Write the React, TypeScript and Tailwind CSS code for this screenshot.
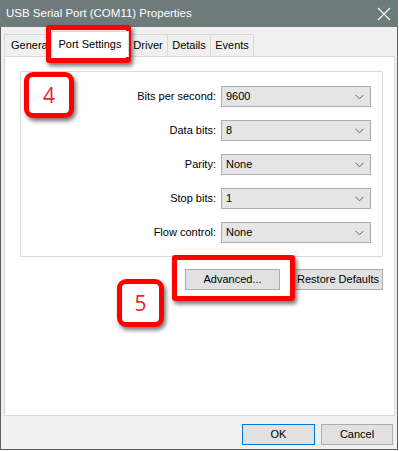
import React from "react";

const font = { fontFamily: '"Liberation Sans", Arial, sans-serif' };

function Chevron() {
  return (
    <svg width="9" height="6" viewBox="0 0 9 6" className="shrink-0">
      <path d="M0.5 0.8 L4.5 4.8 L8.5 0.8" fill="none" stroke="#606060" strokeWidth="1" />
    </svg>
  );
}

function Row({ label, value }: { label: string; value: string }) {
  return (
    <div className="flex items-center h-[21px]">
      <div className="w-[200px] text-right pr-[5px] text-[11px] text-black">{label}</div>
      <div className="w-[150px] h-[21px] border border-[#adadad] bg-[#e5e5e5] flex items-center justify-between pl-[4px] pr-[6px] text-[11px] text-black">
        <span>{value}</span>
        <Chevron />
      </div>
    </div>
  );
}

export default function App() {
  return (
    <div className="w-[399px] h-[451px] bg-white" style={font}>
      <div className="relative w-[398px] h-[450px] bg-[#f0f0f0] border-l border-r border-b border-[#5f5f5f] flex flex-col">
        {/* Title bar */}
        <div className="h-[27px] bg-[#6d7b7b] flex items-center justify-between pl-[6px] pr-[7px] -mx-px">
          <span className="text-white text-[11.5px]">USB Serial Port (COM11) Properties</span>
          <svg width="14" height="14" viewBox="0 0 14 14">
            <path d="M1 1 L13 13 M13 1 L1 13" stroke="white" strokeWidth="1.1" />
          </svg>
        </div>

        {/* Tabs */}
        <div className="flex items-end pl-[3px] pt-[3px] h-[29px] text-[11px] text-black">
          <div className="h-[22px] w-[47px] border border-b-0 border-[#d9d9d9] bg-[#f0f0f0] flex items-center pl-[6px] overflow-hidden whitespace-nowrap">General</div>
          <div className="h-[26px] w-[78px] -mb-px border border-b-0 border-[#d9d9d9] bg-white flex items-center justify-center relative z-10">Port Settings</div>
          <div className="h-[22px] w-[39px] border border-b-0 border-l-0 border-[#d9d9d9] bg-[#f0f0f0] flex items-center justify-center">Driver</div>
          <div className="h-[22px] w-[43px] border border-b-0 border-l-0 border-[#d9d9d9] bg-[#f0f0f0] flex items-center justify-center">Details</div>
          <div className="h-[22px] w-[43px] border border-b-0 border-l-0 border-[#d9d9d9] bg-[#f0f0f0] flex items-center justify-center">Events</div>
        </div>

        {/* Panel */}
        <div className="ml-[3px] mr-[2px] h-[360px] bg-white border border-[#d9d9d9] pt-[14px] pl-[15px] pr-[11px]">
          <div className="border border-[#dcdcdc] pt-[14px] pb-[13px] flex flex-col gap-[13px]">
            <Row label="Bits per second:" value="9600" />
            <Row label="Data bits:" value="8" />
            <Row label="Parity:" value="None" />
            <Row label="Stop bits:" value="1" />
            <Row label="Flow control:" value="None" />
          </div>
          <div className="flex justify-end gap-[13px] mt-[12px] text-[11px] text-black">
            <div className="w-[95px] h-[21px] border border-[#adadad] bg-[#e1e1e1] flex items-center justify-center">Advanced...</div>
            <div className="w-[90px] h-[21px] border border-[#adadad] bg-[#e1e1e1] flex items-center justify-center">Restore Defaults</div>
          </div>
        </div>

        {/* Bottom buttons */}
        <div className="flex justify-end gap-[6px] pr-[4px] mt-[8px] text-[11px] text-black">
          <div className="w-[73px] h-[21px] border border-[#0078d7] bg-[#e1e1e1] flex items-center justify-center">OK</div>
          <div className="w-[72px] h-[21px] border border-[#adadad] bg-[#e1e1e1] flex items-center justify-center">Cancel</div>
        </div>

        {/* Annotations */}
        <div className="absolute left-[45px] top-[25px] w-[85px] h-[38px] border-[5px] border-[#ff0000] rounded-[3px] shadow-[2px_3px_4px_rgba(0,0,0,0.55)]" />
        <div className="absolute left-[23px] top-[72px] w-[50px] h-[46px] border-[5px] border-[#ff0000] rounded-[9px] bg-white shadow-[2px_3px_4px_rgba(0,0,0,0.55)] flex items-center justify-center">
          <span className="text-[21px] text-[#e8232b] leading-none" style={{ fontFamily: '"Open Sans", "Liberation Sans", sans-serif' }}>4</span>
        </div>
        <div className="absolute left-[171px] top-[255px] w-[123px] h-[46px] border-[5px] border-[#ff0000] rounded-[3px] shadow-[2px_3px_4px_rgba(0,0,0,0.55)]" />
        <div className="absolute left-[116px] top-[279px] w-[47px] h-[48px] border-[5px] border-[#ff0000] rounded-[9px] bg-white shadow-[2px_3px_4px_rgba(0,0,0,0.55)] flex items-center justify-center">
          <span className="text-[21px] text-[#e8232b] leading-none" style={{ fontFamily: '"Open Sans", "Liberation Sans", sans-serif' }}>5</span>
        </div>
      </div>
    </div>
  );
}
